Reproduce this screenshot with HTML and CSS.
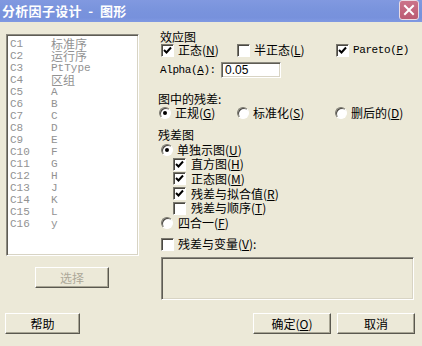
FILE: index.html
```html
<!DOCTYPE html>
<html lang="zh">
<head>
<meta charset="UTF-8">
<title>分析因子设计 - 图形</title>
<link rel="stylesheet" href="styles.css">
</head>
<body>
<div class="dialog">
    <div class="titlebar">
        <span class="title">分析因子设计 &nbsp;-&nbsp; 图形</span>
        <span class="close">
            <svg width="12" height="12" viewBox="0 0 12 12"><path d="M2 2 L10 10 M10 2 L2 10" stroke="#fff" stroke-width="2" stroke-linecap="square"/></svg>
        </span>
    </div>

    <div class="main">
        <!-- Variable list -->
        <div class="left">
            <ul class="varlist">
                <li><span class="col">C1</span><span class="cjk">标准序</span></li>
                <li><span class="col">C2</span><span class="cjk">运行序</span></li>
                <li><span class="col">C3</span><span>PtType</span></li>
                <li><span class="col">C4</span><span class="cjk">区组</span></li>
                <li><span class="col">C5</span><span>A</span></li>
                <li><span class="col">C6</span><span>B</span></li>
                <li><span class="col">C7</span><span>C</span></li>
                <li><span class="col">C8</span><span>D</span></li>
                <li><span class="col">C9</span><span>E</span></li>
                <li><span class="col">C10</span><span>F</span></li>
                <li><span class="col">C11</span><span>G</span></li>
                <li><span class="col">C12</span><span>H</span></li>
                <li><span class="col">C13</span><span>J</span></li>
                <li><span class="col">C14</span><span>K</span></li>
                <li><span class="col">C15</span><span>L</span></li>
                <li><span class="col">C16</span><span>y</span></li>
            </ul>
            <button class="btn btn-select" disabled>选择</button>
        </div>

        <!-- Options -->
        <div class="right">
            <div class="heading h-effect">效应图</div>
            <div class="row row-effect">
                <label class="opt w1"><span class="check on"><svg width="11" height="11" viewBox="0 0 11 11"><polyline points="2,5 4.5,7.5 9,2.5" fill="none" stroke="#000" stroke-width="2"/></svg></span>正态(<u>N</u>)</label>
                <label class="opt w2"><span class="check"></span>半正态(<u>L</u>)</label>
                <label class="opt"><span class="check on"><svg width="11" height="11" viewBox="0 0 11 11"><polyline points="2,5 4.5,7.5 9,2.5" fill="none" stroke="#000" stroke-width="2"/></svg></span><span class="mono">Pareto(<u>P</u>)</span></label>
            </div>
            <div class="row row-alpha">
                <span class="mono alpha-label">Alpha(<u>A</u>):</span>
                <span class="field">0.05</span>
            </div>

            <div class="heading h-resid">图中的残差:</div>
            <div class="row row-radio">
                <label class="opt r1"><span class="radio on"></span>正规(<u>G</u>)</label>
                <label class="opt r2"><span class="radio"></span>标准化(<u>S</u>)</label>
                <label class="opt"><span class="radio"></span>删后的(<u>D</u>)</label>
            </div>

            <div class="heading h-plots">残差图</div>
            <div class="row row-single">
                <label class="opt"><span class="radio on"></span>单独示图(<u>U</u>)</label>
            </div>
            <div class="sub">
                <div class="row sub-row h14">
                    <label class="opt"><span class="check on"><svg width="11" height="11" viewBox="0 0 11 11"><polyline points="2,5 4.5,7.5 9,2.5" fill="none" stroke="#000" stroke-width="2"/></svg></span>直方图(<u>H</u>)</label>
                </div>
                <div class="row sub-row h15">
                    <label class="opt"><span class="check on"><svg width="11" height="11" viewBox="0 0 11 11"><polyline points="2,5 4.5,7.5 9,2.5" fill="none" stroke="#000" stroke-width="2"/></svg></span>正态图(<u>M</u>)</label>
                </div>
                <div class="row sub-row h15">
                    <label class="opt"><span class="check on"><svg width="11" height="11" viewBox="0 0 11 11"><polyline points="2,5 4.5,7.5 9,2.5" fill="none" stroke="#000" stroke-width="2"/></svg></span>残差与拟合值(<u>R</u>)</label>
                </div>
                <div class="row sub-row h14">
                    <label class="opt"><span class="check"></span>残差与顺序(<u>T</u>)</label>
                </div>
            </div>
            <div class="row row-four">
                <label class="opt"><span class="radio"></span>四合一(<u>F</u>)</label>
            </div>

            <div class="row row-vars">
                <label class="opt"><span class="check"></span>残差与变量(<u>V</u>):</label>
            </div>
            <div class="varbox"></div>
        </div>
    </div>

    <div class="footer">
        <button class="btn btn-help">帮助</button>
        <button class="btn btn-ok">确定(<u>O</u>)</button>
        <button class="btn btn-cancel">取消</button>
    </div>
</div>
</body>
</html>
```

FILE: styles.css
```css
/* Reset */
* {
    margin: 0;
    padding: 0;
    box-sizing: border-box;
}

body {
    background-color: #ece9d8;
    font-family: "Noto Sans CJK SC", "Liberation Sans", sans-serif;
    font-size: 12px;
    color: #000;
    width: 422px;
    height: 346px;
    overflow: hidden;
}

u {
    text-decoration: underline;
    text-underline-offset: 1px;
}

.mono {
    font-family: "Liberation Mono", "Noto Sans CJK SC", monospace;
    font-size: 11px;
    letter-spacing: -0.4px;
}

/* Title bar */
.titlebar {
    height: 22px;
    display: flex;
    align-items: center;
    justify-content: space-between;
    background: linear-gradient(to bottom, #8199e0 0%, #7a94dd 40%, #7791dc 80%, #8099e2 100%);
    padding: 0 3px 0 2px;
}

.title {
    color: #fff;
    font-weight: bold;
    font-size: 13px;
    letter-spacing: 0.3px;
    white-space: pre;
    line-height: 22px;
}

.close {
    width: 20px;
    height: 20px;
    margin-top: -2px;
    display: flex;
    align-items: center;
    justify-content: center;
    background: linear-gradient(to bottom, #cb7389, #bb5b73);
    border: 1px solid #eadbe3;
    border-radius: 3px;
}

/* Main area */
.main {
    display: flex;
    height: 278px;
}

.left {
    width: 133px;
    margin-left: 6px;
    margin-top: 12px;
    display: flex;
    flex-direction: column;
}

.varlist {
    list-style: none;
    height: 222px;
    background: #fff;
    border: 1px solid;
    border-color: #8c8a80 #fff #fff #8c8a80;
    box-shadow: inset 1px 1px #5e5c54, inset -1px -1px #d8d4c4;
    padding: 3px 0 0 2px;
    color: #929292;
}

.varlist li {
    display: flex;
    height: 12px;
    line-height: 12px;
    font-family: "Liberation Mono", monospace;
    font-size: 11px;
}

.varlist .col {
    width: 42px;
    padding-left: 1px;
}

.varlist .cjk {
    font-family: "Noto Sans CJK SC", sans-serif;
    font-size: 12px;
}

/* Buttons */
.btn {
    font-family: "Noto Sans CJK SC", sans-serif;
    font-size: 12px;
    height: 21px;
    background: #ece9d8;
    color: #000;
    border: 1px solid;
    border-color: #fff #5a584f #5a584f #fff;
    box-shadow: inset -1px -1px #a9a695;
    line-height: 17px;
}

.btn-select {
    width: 74px;
    margin-top: 11px;
    margin-left: 29px;
    color: #aca899;
}

.footer {
    display: flex;
    margin-top: 13px;
}

.btn-help {
    width: 75px;
    margin-left: 5px;
}

.btn-ok {
    width: 78px;
    margin-left: 173px;
}

.btn-cancel {
    width: 78px;
    margin-left: 6px;
}

/* Right column */
.right {
    width: 256px;
    margin-left: 19px;
    padding-top: 8px;
    display: flex;
    flex-direction: column;
}

.heading {
    height: 13px;
    line-height: 13px;
}

.h-effect {
    padding-left: 2px;
}

.h-resid {
    margin-top: 14px;
}

.h-plots {
    margin-top: 8px;
}

.row {
    display: flex;
    align-items: center;
    height: 14px;
}

.opt {
    display: flex;
    align-items: center;
    white-space: nowrap;
    line-height: 14px;
}

.row-effect {
    padding-left: 3px;
}

.w1 {
    width: 76px;
}

.w2 {
    width: 99px;
}

.row-effect .check,
.row-vars .check {
    margin-right: 4px;
}

.row-alpha {
    margin-top: 4px;
    height: 17px;
    padding-left: 2px;
}

.alpha-label {
    width: 61px;
}

.field {
    width: 60px;
    height: 16px;
    background: #fff;
    border: 1px solid;
    border-color: #8c8a80 #fff #fff #8c8a80;
    box-shadow: inset 1px 1px #5e5c54, inset -1px -1px #d8d4c4;
    font-family: "Liberation Sans", sans-serif;
    font-size: 12px;
    line-height: 14px;
    padding-left: 3px;
}

.row-radio {
    margin-top: 1px;
    padding-left: 1px;
}

.r1 {
    width: 78px;
}

.r2 {
    width: 98px;
}

.radio {
    position: relative;
    width: 12px;
    height: 12px;
    border-radius: 50%;
    background: #fff;
    border: 1px solid;
    border-color: #7a786e #fff #fff #7a786e;
    box-shadow: inset 1px 1px #4a4842;
    margin-right: 4px;
    flex-shrink: 0;
}

.radio.on::after {
    content: "";
    position: absolute;
    left: 3px;
    top: 3px;
    width: 4px;
    height: 4px;
    border-radius: 50%;
    background: #000;
}

.check {
    width: 13px;
    height: 13px;
    background: #fff;
    border: 1px solid;
    border-color: #7a786e #fff #fff #7a786e;
    box-shadow: inset 1px 1px #4a4842;
    margin-right: 5px;
    flex-shrink: 0;
    display: flex;
}

.row-single {
    margin-top: 2px;
    padding-left: 3px;
}

.sub {
    padding-left: 15px;
}

.sub-row .check {
    margin-right: 5px;
}

.h14 {
    height: 14px;
}

.h15 {
    height: 15px;
}

.row-four {
    margin-top: 1px;
    padding-left: 3px;
}

.row-four .radio {
    margin-right: 5px;
}

.row-vars {
    margin-top: 7px;
    padding-left: 3px;
}

.varbox {
    margin-top: 6px;
    margin-left: 3px;
    width: 253px;
    height: 43px;
    border: 1px solid;
    border-color: #8c8a80 #fff #fff #8c8a80;
    box-shadow: inset 1px 1px #5e5c54, inset -1px -1px #d8d4c4;
}
```
